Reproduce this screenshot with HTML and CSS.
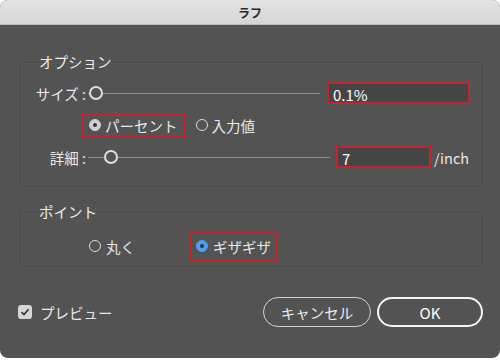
FILE: index.html
```html
<html>
	<head>
		<title>ラフ</title>
		<link rel="stylesheet" href="styles.css">
	</head>
	<body>
		<div class="dialog">
			<div class="titlebar">ラフ</div>
			<div class="content">
				<fieldset class="group">
					<legend>オプション</legend>
					<div class="row">
						<span class="label">サイズ :</span>
						<div class="slider"><span class="knob"></span></div>
						<div class="field hot wide">0.1%</div>
					</div>
					<div class="row radios">
						<div class="choice hot"><span class="radio on"></span>パーセント</div>
						<div class="choice"><span class="radio"></span>入力値</div>
					</div>
					<div class="row">
						<span class="label">詳細 :</span>
						<div class="slider"><span class="knob detail"></span></div>
						<div class="field hot narrow">7</div>
						<span class="unit">/inch</span>
					</div>
				</fieldset>
				<fieldset class="group points">
					<legend>ポイント</legend>
					<div class="row radios tall">
						<div class="choice"><span class="radio"></span>丸く</div>
						<div class="choice hot"><span class="radio blue"></span>ギザギザ</div>
					</div>
				</fieldset>
				<div class="footer">
					<div class="preview">
						<span class="check">
							<svg width="10" height="10" viewBox="0 0 10 10"><path d="M1.5 5.2 L4 7.6 L8.6 2.2" fill="none" stroke="#333" stroke-width="1.6"/></svg>
						</span>
						プレビュー
					</div>
					<div class="buttons">
						<button class="btn">キャンセル</button>
						<button class="btn default">OK</button>
					</div>
				</div>
			</div>
		</div>
	</body>
</html>
```

FILE: styles.css
```css
body {
	margin: 0;
	background-color: #fff;
	font-family: "Noto Sans CJK JP", "Noto Sans", sans-serif;
	color: #e8e8e8;
}
.dialog {
	width: 500px;
	height: 358px;
	background-color: #535353;
	border-radius: 8px;
	overflow: hidden;
}
.titlebar {
	height: 25px;
	line-height: 25px;
	text-align: center;
	font-size: 12px;
	font-weight: bold;
	color: #2a2a2a;
	background: linear-gradient(#e4e4e4, #d6d6d6);
	border-bottom: 1px solid #bcbcbc;
	box-sizing: border-box;
}
.content {
	padding: 0 17px 0 20px;
}
.group {
	margin: 27px 0 0 0;
	padding: 0 12px 17px 9px;
	border: 1px solid #4a4a4a;
	box-shadow: 1px 1px 0 #5a5a5a, inset 1px 1px 0 #5a5a5a;
	font-size: 14.5px;
}
.group legend {
	padding: 0;
	margin-left: 9px;
	line-height: 20px;
	font-size: 14.5px;
	color: #ececec;
}
.points {
	margin-top: 15px;
	padding-bottom: 5px;
}
.row {
	display: flex;
	align-items: center;
	height: 24px;
	margin-top: 8px;
}
.row:first-of-type {
	margin-top: 9px;
}
.label {
	width: 56px;
	padding-right: 2px;
	text-align: right;
	white-space: nowrap;
}
.slider {
	flex: 1;
	height: 14px;
	position: relative;
}
.slider::before {
	content: "";
	display: block;
	height: 1px;
	margin-top: 7px;
	background-color: #8c8c8c;
}
.knob {
	position: absolute;
	left: 1px;
	top: 0;
	width: 10px;
	height: 10px;
	border: 2px solid #dedede;
	border-radius: 50%;
	background-color: #535353;
}
.knob.detail {
	left: 16px;
}
.field {
	height: 22px;
	line-height: 22px;
	box-sizing: border-box;
	padding-left: 4px;
	background-color: #454545;
	color: #fff;
	font-size: 15px;
}
.wide {
	width: 143px;
	margin-left: 7px;
}
.narrow {
	width: 95px;
	margin-left: 6px;
}
.unit {
	margin-left: 3px;
	width: 36px;
}
.hot {
	border: 2px solid #c0272d;
}
.radios {
	padding-left: 52px;
	gap: 11px;
}
.choice {
	display: flex;
	align-items: center;
	gap: 4px;
	height: 24px;
	box-sizing: border-box;
	white-space: nowrap;
}
.choice.hot {
	padding: 0 5px 0 5px;
}
.tall {
	height: 30px;
	margin-top: 5px;
	padding-left: 59px;
}
.tall .choice {
	height: 30px;
	gap: 5px;
}
.tall .choice.hot {
	margin-left: 43px;
}
.radio {
	width: 10px;
	height: 10px;
	border: 1.5px solid #dadada;
	border-radius: 50%;
	position: relative;
}
.radio.on {
	background-color: #d0d0d0;
	border-color: #d0d0d0;
}
.radio.blue {
	background-color: #4aa0f2;
	border-color: #4aa0f2;
}
.radio.on::after, .radio.blue::after {
	content: "";
	position: absolute;
	left: 3px;
	top: 3px;
	width: 4px;
	height: 4px;
	border-radius: 50%;
	background-color: #333;
}
.footer {
	display: flex;
	align-items: center;
	justify-content: space-between;
	margin: 30px 0 0 -2px;
	font-size: 14.5px;
}
.preview {
	display: flex;
	align-items: center;
	gap: 8px;
}
.check {
	width: 14px;
	height: 14px;
	border-radius: 3px;
	background-color: #d6d6d6;
	display: flex;
	align-items: center;
	justify-content: center;
}
.buttons {
	display: flex;
	gap: 6px;
}
.btn {
	height: 30px;
	width: 108px;
	border-radius: 15px;
	border: 1.5px solid #d2d2d2;
	background-color: #535353;
	color: #ececec;
	font-family: "Noto Sans CJK JP", "Noto Sans", sans-serif;
	font-size: 14.5px;
	padding: 0;
}
.btn.default {
	width: 106px;
	border: 2.5px solid #f4f4f4;
	color: #fff;
	font-size: 15px;
}
```
